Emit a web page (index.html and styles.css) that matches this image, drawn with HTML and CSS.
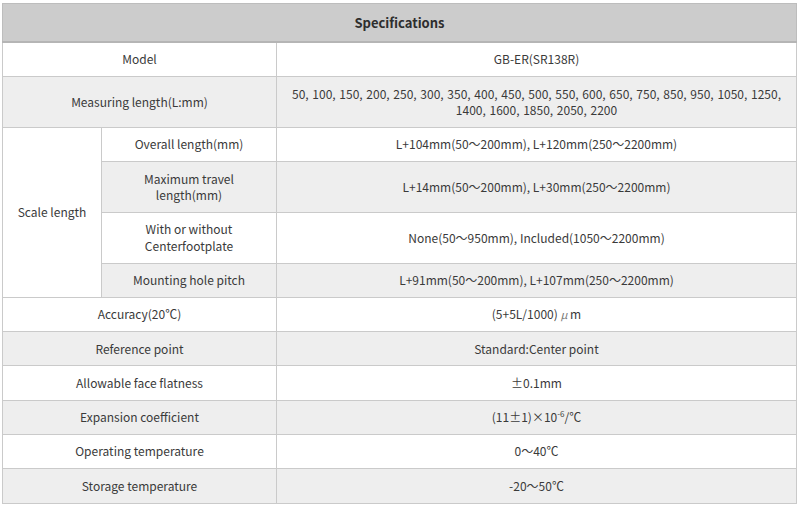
FILE: index.html
```html
<!DOCTYPE html>
<html lang="en">
<head>
<meta charset="utf-8">
<title>Specifications</title>
<link rel="stylesheet" href="styles.css">
</head>
<body>
<div class="wrap">
<table class="spec">
  <colgroup>
    <col class="c1"><col class="c2"><col class="c3">
  </colgroup>
  <thead>
    <tr><th colspan="3">Specifications</th></tr>
  </thead>
  <tbody>
    <tr><td colspan="2">Model</td><td>GB-ER(SR138R)</td></tr>
    <tr class="alt"><td colspan="2">Measuring length(L:mm)</td><td class="list">50, 100, 150, 200, 250, 300, 350, 400, 450, 500, 550, 600, 650, 750, 850, 950, 1050, 1250, 1400, 1600, 1850, 2050, 2200</td></tr>
    <tr><td rowspan="4" class="group">Scale length</td><td>Overall length(mm)</td><td>L+104mm(50〜200mm), L+120mm(250〜2200mm)</td></tr>
    <tr class="alt"><td>Maximum travel<br>length(mm)</td><td>L+14mm(50〜200mm), L+30mm(250〜2200mm)</td></tr>
    <tr><td>With or without<br>Centerfootplate</td><td>None(50〜950mm), Included(1050〜2200mm)</td></tr>
    <tr class="alt"><td>Mounting hole pitch</td><td>L+91mm(50〜200mm), L+107mm(250〜2200mm)</td></tr>
    <tr><td colspan="2">Accuracy(20℃)</td><td>(5+5L/1000) <span class="mu">μ</span> m</td></tr>
    <tr class="alt"><td colspan="2">Reference point</td><td>Standard:Center point</td></tr>
    <tr><td colspan="2">Allowable face flatness</td><td>±0.1mm</td></tr>
    <tr class="alt"><td colspan="2">Expansion coefficient</td><td>(11±1)×10<sup>-6</sup>/℃</td></tr>
    <tr><td colspan="2">Operating temperature</td><td>0〜40℃</td></tr>
    <tr class="alt"><td colspan="2">Storage temperature</td><td>-20〜50℃</td></tr>
  </tbody>
</table>
</div>
</body>
</html>
```
FILE: styles.css
```css
html, body {
  margin: 0;
  padding: 0;
  background: #ffffff;
}
.wrap {
  padding: 3px 3px 0 2px;
}
.spec {
  width: 100%;
  border-collapse: collapse;
  table-layout: fixed;
  font-family: "Noto Sans CJK JP", "Noto Sans", sans-serif;
  font-size: 12px;
  color: #3a3a3a;
  border: 1px solid #bdbdbd;
}
.c1 { width: 99px; }
.c2 { width: 175px; }
.c3 { width: auto; }
.spec th {
  background: #cccccc;
  font-weight: bold;
  font-size: 13px;
  color: #2e2e2e;
  height: 37px;
  padding: 0;
  border: 1px solid #bdbdbd;
  border-bottom: 2px solid #b5b5b5;
  text-align: center;
}
.spec td {
  border: 1px solid #cacaca;
  padding: 8.45px 6px;
  line-height: 16.4px;
  text-align: center;
  vertical-align: middle;
}
.spec td.list {
  word-spacing: 1px;
  padding-left: 10px;
  padding-right: 10px;
}
.spec tr.alt td {
  background: #eeeeee;
}
.spec td.group {
  background: #ffffff;
}
.mu {
  font-style: italic;
  color: #777;
  font-size: 11px;
}
.spec sup {
  font-size: 8px;
  line-height: 0;
  vertical-align: 5px;
}
```
